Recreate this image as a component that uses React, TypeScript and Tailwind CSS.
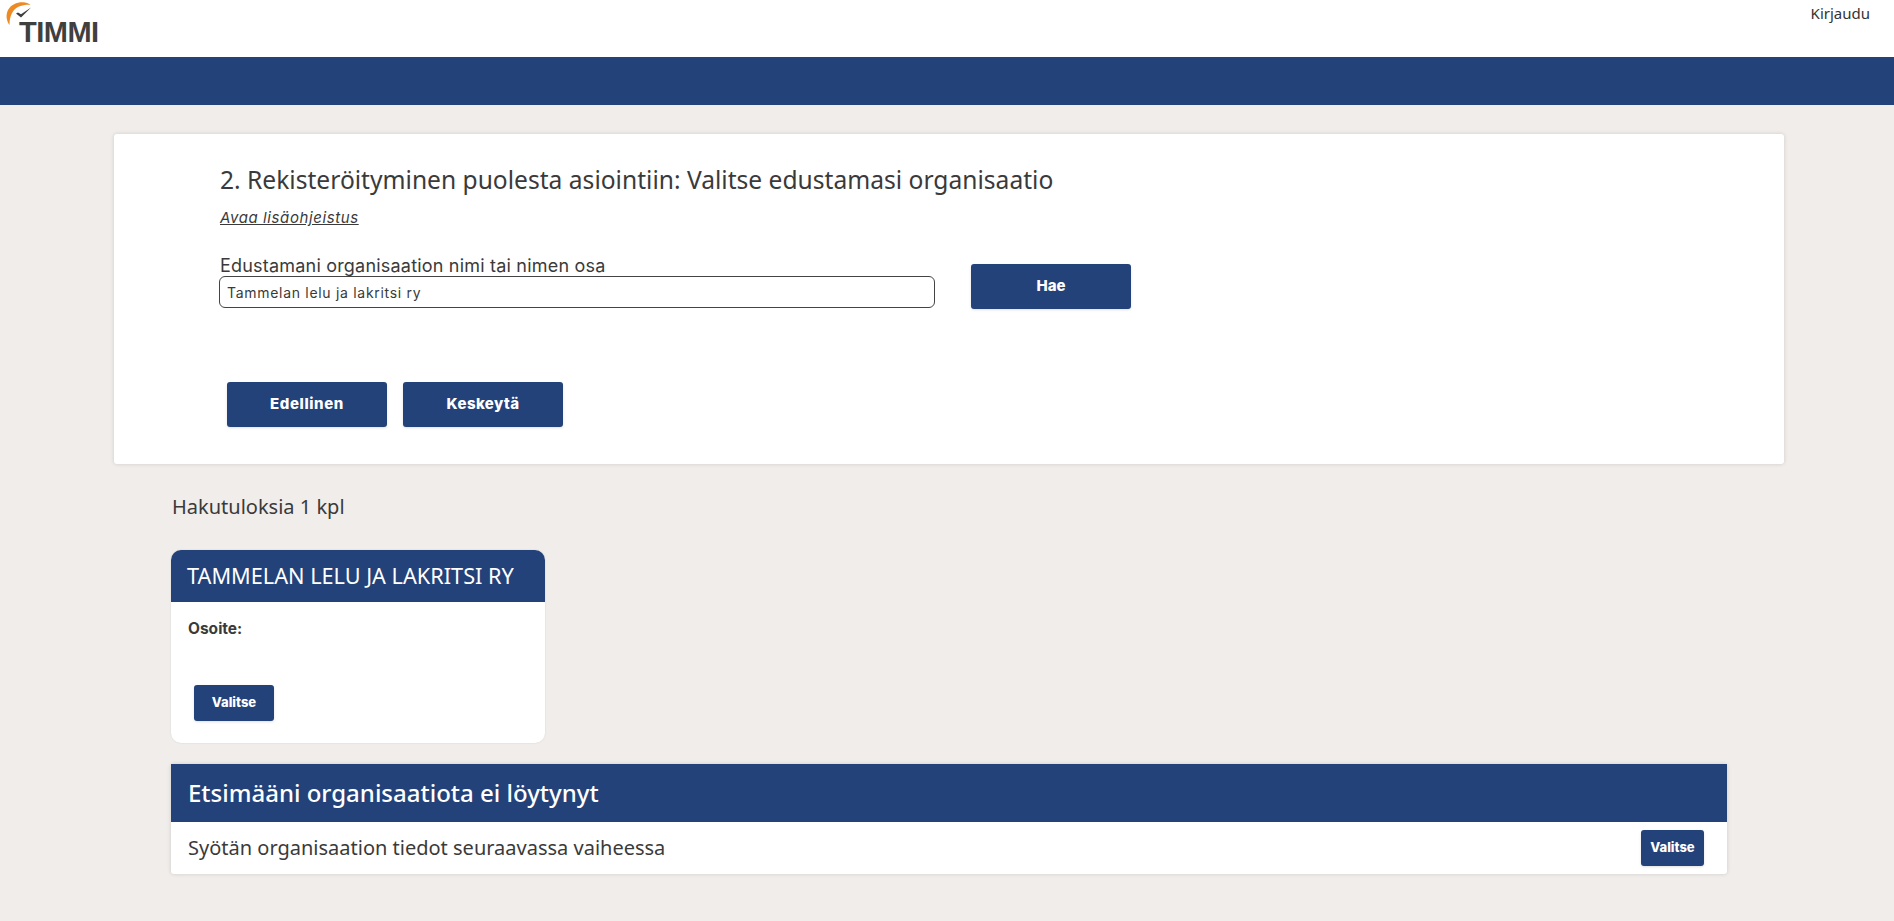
const workSans = "font-['Inter','Liberation_Sans',sans-serif]";

function Logo() {
  return (
    <div className="relative h-[57px] w-[110px]">
      <svg className="absolute left-0 top-0" width="34" height="30" viewBox="0 0 34 30" fill="none">
        <path d="M9.5 25 C6.5 21 5.5 15 8 10 C11 4.5 17 2 23 2.2 C26 2.4 28.5 3.2 30.5 4.8 C27 4.6 23 4.8 19 6.6 C12.5 9.5 9.5 16 9.5 25 Z" fill="#ee8a22" />
        <path d="M16 13.5 L21 17.5 L31 7.5 L21 14.2 L18 12.6 Z" fill="#3f3f3f" />
      </svg>
      <span className="absolute left-[19px] top-[16px] font-['Liberation_Sans',sans-serif] text-[29px] font-bold leading-[32px] tracking-[-0.5px] text-[#3f3f3f]">
        TIMMI
      </span>
    </div>
  );
}

function Button({ label, className }: { label: string; className: string }) {
  return (
    <button className={`${workSans} rounded-[3px] bg-[#23427a] font-extrabold text-white shadow-sm ${className}`}>
      {label}
    </button>
  );
}

export default function App() {
  return (
    <div className="min-h-[921px] bg-[#f1edea] font-['Noto_Sans',sans-serif] text-[#3a3a3a]">
      {/* Header */}
      <header className="flex h-[57px] justify-between bg-white">
        <Logo />
        <a className="mr-[24px] mt-[3px] font-['Noto_Sans',sans-serif] text-[15px] leading-[20px] text-[#333]">Kirjaudu</a>
      </header>
      <div className="h-[48px] bg-[#23427a]" />

      {/* Search card */}
      <section className="ml-[114px] mr-[110px] mt-[29px] h-[330px] rounded-[3px] bg-white pl-[106px] pt-[29px] shadow-[0_0_4px_rgba(0,0,0,0.15)]">
        <h1 className="text-[24.6px] leading-[34px] text-[#3a3a3a]">
          2. Rekisteröityminen puolesta asiointiin: Valitse edustamasi organisaatio
        </h1>
        <a className={`${workSans} mt-[12px] block w-fit text-[15px] italic leading-[18px] tracking-[0.6px] underline`}>Avaa lisäohjeistus</a>
        <div className="-ml-px mt-[29px] flex items-start">
          <div>
            <label className={`${workSans} block pl-px text-[18px] leading-[20px] tracking-[0.2px]`}>Edustamani organisaation nimi tai nimen osa</label>
            <input
              readOnly
              value="Tammelan lelu ja lakritsi ry"
              className={`${workSans} block h-[32px] w-[716px] rounded-[6px] border border-[#444] bg-white px-[7px] text-[14px] tracking-[0.7px] text-[#3a3a3a]`}
            />
          </div>
          <Button label="Hae" className="ml-[36px] mt-[8px] h-[45px] w-[160px] text-[15px]" />
        </div>
        <div className="ml-[7px] mt-[73px] flex gap-[16px]">
          <Button label="Edellinen" className="h-[45px] w-[160px] text-[15px] tracking-[0.6px]" />
          <Button label="Keskeytä" className="h-[45px] w-[160px] text-[15px] tracking-[0.4px]" />
        </div>
      </section>

      {/* Results */}
      <div className="mx-[171px] mt-[29px]">
        <p className="ml-px text-[20px] leading-[28px]">Hakutuloksia 1 kpl</p>
        <article className="mt-[29px] h-[193px] w-[374px] overflow-hidden rounded-[10px] bg-white shadow-[0_0_2px_rgba(0,0,0,0.12)]">
          <h2 className="flex h-[52px] items-center bg-[#23427a] px-[16px] text-[21.7px] text-white">TAMMELAN LELU JA LAKRITSI RY</h2>
          <p className={`${workSans} ml-[17px] mt-[17px] text-[15.5px] font-bold leading-[20px]`}>Osoite:</p>
          <Button label="Valitse" className="ml-[23px] mt-[46px] h-[36px] w-[80px] text-[13px]" />
        </article>

        <article className="mt-[21px] h-[110px] w-[1556px] rounded-[3px] bg-white shadow-[0_0_4px_rgba(0,0,0,0.15)]">
          <h2 className="flex h-[58px] items-center bg-[#23427a] px-[17px] text-[24px] font-medium text-white">Etsimääni organisaatiota ei löytynyt</h2>
          <div className="flex h-[52px] items-center justify-between pl-[17px] pr-[23px]">
            <span className="text-[20px]">Syötän organisaation tiedot seuraavassa vaiheessa</span>
            <Button label="Valitse" className="h-[36px] w-[63px] text-[13px]" />
          </div>
        </article>
      </div>
    </div>
  );
}
